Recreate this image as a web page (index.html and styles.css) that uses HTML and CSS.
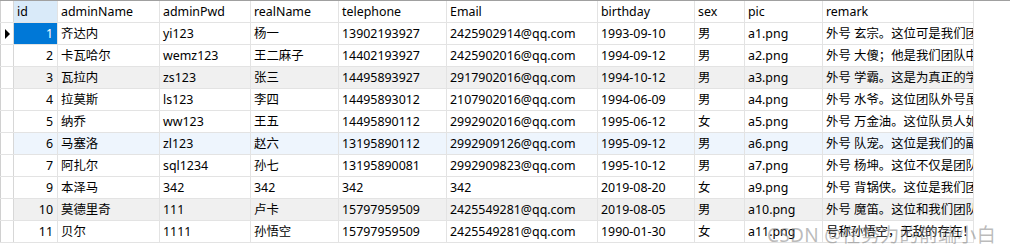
FILE: index.html
```html
<!DOCTYPE html>
<html lang="zh-CN">
<head>
    <meta charset="UTF-8">
    <title>admin</title>
    <link rel="stylesheet" href="styles.css">
</head>
<body>
    <div class="grid-wrap">
        <table class="grid">
            <colgroup>
                <col class="c-ind">
                <col class="c-id">
                <col class="c-name">
                <col class="c-pwd">
                <col class="c-real">
                <col class="c-tel">
                <col class="c-mail">
                <col class="c-birth">
                <col class="c-sex">
                <col class="c-pic">
                <col class="c-remark">
            </colgroup>
            <thead>
                <tr>
                    <th class="ind"></th>
                    <th class="sorted">id</th>
                    <th>adminName</th>
                    <th>adminPwd</th>
                    <th>realName</th>
                    <th>telephone</th>
                    <th>Email</th>
                    <th>birthday</th>
                    <th>sex</th>
                    <th>pic</th>
                    <th>remark</th>
                </tr>
            </thead>
            <tbody>
                <tr>
                    <td class="ind"><span class="arrow"></span></td>
                    <td class="num current">1</td>
                    <td>齐达内</td><td>yi123</td><td>杨一</td><td>13902193927</td>
                    <td>2425902914@qq.com</td><td>1993-09-10</td><td>男</td><td>a1.png</td>
                    <td>外号 玄宗。这位可是我们团队的灵魂人物</td>
                </tr>
                <tr>
                    <td class="ind"></td>
                    <td class="num">2</td>
                    <td>卡瓦哈尔</td><td>wemz123</td><td>王二麻子</td><td>14402193927</td>
                    <td>2425902016@qq.com</td><td>1994-09-12</td><td>男</td><td>a2.png</td>
                    <td>外号 大傻；他是我们团队中最努力的</td>
                </tr>
                <tr class="alt">
                    <td class="ind"></td>
                    <td class="num">3</td>
                    <td>瓦拉内</td><td>zs123</td><td>张三</td><td>14495893927</td>
                    <td>2917902016@qq.com</td><td>1994-10-12</td><td>男</td><td>a3.png</td>
                    <td>外号 学霸。这是为真正的学霸</td>
                </tr>
                <tr>
                    <td class="ind"></td>
                    <td class="num">4</td>
                    <td>拉莫斯</td><td>ls123</td><td>李四</td><td>14495893012</td>
                    <td>2107902016@qq.com</td><td>1994-06-09</td><td>男</td><td>a4.png</td>
                    <td>外号 水爷。这位团队外号虽然</td>
                </tr>
                <tr>
                    <td class="ind"></td>
                    <td class="num">5</td>
                    <td>纳乔</td><td>ww123</td><td>王五</td><td>14495890112</td>
                    <td>2992902016@qq.com</td><td>1995-06-12</td><td>女</td><td>a5.png</td>
                    <td>外号 万金油。这位队员人如其名</td>
                </tr>
                <tr class="hover">
                    <td class="ind"></td>
                    <td class="num">6</td>
                    <td>马塞洛</td><td>zl123</td><td>赵六</td><td>13195890112</td>
                    <td>2992909126@qq.com</td><td>1995-09-12</td><td>男</td><td>a6.png</td>
                    <td>外号 队宠。这位是我们的副队长</td>
                </tr>
                <tr>
                    <td class="ind"></td>
                    <td class="num">7</td>
                    <td>阿扎尔</td><td>sql1234</td><td>孙七</td><td>13195890081</td>
                    <td>2992909823@qq.com</td><td>1995-10-12</td><td>男</td><td>a7.png</td>
                    <td>外号 杨坤。这位不仅是团队的</td>
                </tr>
                <tr>
                    <td class="ind"></td>
                    <td class="num">9</td>
                    <td>本泽马</td><td>342</td><td>342</td><td>342</td>
                    <td>342</td><td>2019-08-20</td><td>女</td><td>a9.png</td>
                    <td>外号 背锅侠。这位是我们团队的</td>
                </tr>
                <tr class="alt">
                    <td class="ind"></td>
                    <td class="num">10</td>
                    <td>莫德里奇</td><td>111</td><td>卢卡</td><td>15797959509</td>
                    <td>2425549281@qq.com</td><td>2019-08-05</td><td>男</td><td>a10.png</td>
                    <td>外号 魔笛。这位和我们团队的</td>
                </tr>
                <tr>
                    <td class="ind"></td>
                    <td class="num">11</td>
                    <td>贝尔</td><td>1111</td><td>孙悟空</td><td>15797959509</td>
                    <td>2425549281@qq.com</td><td>1990-01-30</td><td>女</td><td>a11.png</td>
                    <td>号称孙悟空，无敌的存在！</td>
                </tr>
            </tbody>
        </table>
        <div class="watermark">CSDN @在努力的前端小白</div>
    </div>
</body>
</html>
```

FILE: styles.css
```css
body {
    margin: 0;
    background: #fff;
    font-family: "Noto Sans", "Noto Sans CJK SC", sans-serif;
    font-size: 12.4px;
    color: #000;
}

.grid-wrap {
    position: relative;
    height: 252px;
    border-top: 1px solid #a0a0a0;
    box-sizing: border-box;
    overflow: hidden;
}

.grid {
    border-collapse: collapse;
    table-layout: fixed;
    width: 973px;
}

.c-ind { width: 13px; }
.c-id { width: 44px; }
.c-name { width: 102px; }
.c-pwd { width: 91px; }
.c-real { width: 88px; }
.c-tel { width: 108px; }
.c-mail { width: 151px; }
.c-birth { width: 97px; }
.c-sex { width: 50px; }
.c-pic { width: 78px; }
.c-remark { width: 151px; }

.grid th,
.grid td {
    height: 21px;
    padding: 0 3px;
    border-right: 1px solid #e3e3e3;
    border-bottom: 1px solid #e3e3e3;
    white-space: nowrap;
    overflow: hidden;
    text-align: left;
    font-weight: normal;
    line-height: 21px;
}

.grid th.sorted {
    background: #d9eaf9;
}

.grid .ind {
    padding: 0;
    border-left: 1px solid #d0d0d0;
    border-right: 1px solid #d7d7d7;
}

.grid td.num {
    text-align: right;
    padding-right: 4px;
}

.grid td.current {
    background: #0078d7;
    color: #fff;
}

.grid tr.alt td {
    background: #f0f0f0;
}

.grid tr.alt td.ind,
.grid tr.hover td.ind {
    background: #fff;
}

.grid tr.hover td {
    background: #eef5fd;
}

.arrow {
    display: block;
    width: 0;
    height: 0;
    margin-left: 4px;
    border-top: 5px solid transparent;
    border-bottom: 5px solid transparent;
    border-left: 5px solid #000;
}

.watermark {
    position: absolute;
    left: 767px;
    top: 219px;
    font-size: 19px;
    color: rgba(120, 120, 120, 0.5);
    letter-spacing: 0.3px;
}
```
